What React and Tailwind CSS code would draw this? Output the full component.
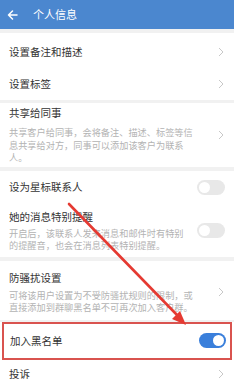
import React from "react";

const font = { fontFamily: '"Noto Sans CJK SC", "Noto Sans", sans-serif' };

function Chevron() {
  return (
    <svg width="6" height="10" viewBox="0 0 6 10" className="shrink-0">
      <path d="M1 1 L5 5 L1 9" fill="none" stroke="#c8c8c8" strokeWidth="1" />
    </svg>
  );
}

function Toggle({ on }) {
  return on ? (
    <div className="w-[27px] h-[15px] rounded-full bg-[#3a7fdb] flex items-center justify-end pr-[2px] shrink-0">
      <div className="w-[11px] h-[11px] rounded-full bg-white" />
    </div>
  ) : (
    <div className="w-[28px] h-[15px] rounded-full bg-[#e8e8e8] flex items-center pl-[2px] shrink-0">
      <div className="w-[11px] h-[11px] rounded-full bg-white" />
    </div>
  );
}

export default function App() {
  return (
    <div className="relative w-[234px] h-[390px] overflow-hidden bg-[#f1f1f1]" style={font}>
      {/* header */}
      <div className="h-[29px] bg-[#4b87cf] flex items-center pl-[7px]">
        <svg width="11" height="10" viewBox="0 0 11 10">
          <path d="M10 5 H1.5 M5.5 1 L1.5 5 L5.5 9" fill="none" stroke="#fff" strokeWidth="1.5" strokeLinecap="round" strokeLinejoin="round" />
        </svg>
        <span className="ml-[15px] text-[11px] text-white leading-none">个人信息</span>
      </div>

      <div className="h-[4px]" />

      <div className="bg-white">
        <div className="h-[35px] flex items-center justify-between pl-[9px] pr-[10px] pt-[2px]">
          <span className="text-[10.5px] text-[#333]">设置备注和描述</span>
          <Chevron />
        </div>
        <div className="h-[32px] flex items-center justify-between pl-[9px] pr-[10px]">
          <span className="text-[10.5px] text-[#333]">设置标签</span>
          <Chevron />
        </div>
      </div>

      <div className="h-[3px]" />

      <div className="bg-white flex items-center justify-between pl-[9px] pr-[10px] pt-[3px] pb-[3px]">
        <div>
          <div className="text-[10.5px] leading-[14px] text-[#333]">共享给同事</div>
          <div className="mt-[6px] text-[9.2px] leading-[12.5px] text-[#b3b3b3]">
            共享客户给同事，会将备注、描述、标签等信<br />息共享给对方，同事可以添加该客户为联系<br />人。
          </div>
        </div>
        <Chevron />
      </div>

      <div className="h-[4px]" />

      <div className="bg-white">
        <div className="h-[33px] flex items-center justify-between pl-[9px] pr-[9px]">
          <span className="text-[10.5px] text-[#333]">设为星标联系人</span>
          <Toggle />
        </div>
        <div className="flex items-center justify-between pl-[9px] pr-[9px] pt-[6px] pb-[5px]">
          <div>
            <div className="text-[10.5px] leading-[14px] text-[#333]">她的消息特别提醒</div>
            <div className="mt-[3px] text-[9.2px] leading-[12.5px] text-[#b3b3b3]">
              开启后，该联系人发来消息和邮件时有特别<br />的提醒音，也会在消息列表特别提醒。
            </div>
          </div>
          <Toggle />
        </div>
      </div>

      <div className="h-[4px]" />

      <div className="bg-white flex items-center justify-between pl-[9px] pr-[10px] pt-[10px] pb-[6px]">
        <div>
          <div className="text-[10.5px] leading-[14px] text-[#333]">防骚扰设置</div>
          <div className="mt-[4px] text-[9.2px] leading-[12.5px] text-[#b3b3b3]">
            可将该用户设置为不受防骚扰规则的限制，或<br />直接添加到群聊黑名单不可再次加入客户群。
          </div>
        </div>
        <Chevron />
      </div>

      <div className="h-[2px]" />

      <div className="bg-white">
        <div className="mx-[2px] h-[38px] border-2 border-[#d9534f] flex items-center justify-between pl-[6px] pr-[4px]">
          <span className="text-[10.5px] text-[#333]">加入黑名单</span>
          <Toggle on />
        </div>
        <div className="h-[32px] flex items-center justify-between pl-[9px] pr-[10px] pb-[4px]">
          <span className="text-[10.5px] text-[#333]">投诉</span>
          <Chevron />
        </div>
      </div>

      {/* red annotation arrow */}
      <svg className="absolute left-0 top-0 pointer-events-none" width="234" height="390" viewBox="0 0 234 390">
        <line x1="69" y1="204" x2="178" y2="316" stroke="#e53a32" strokeWidth="2.6" strokeLinecap="round" />
        <polygon points="186,325 172,319 180,311" fill="#e53a32" />
      </svg>
    </div>
  );
}
